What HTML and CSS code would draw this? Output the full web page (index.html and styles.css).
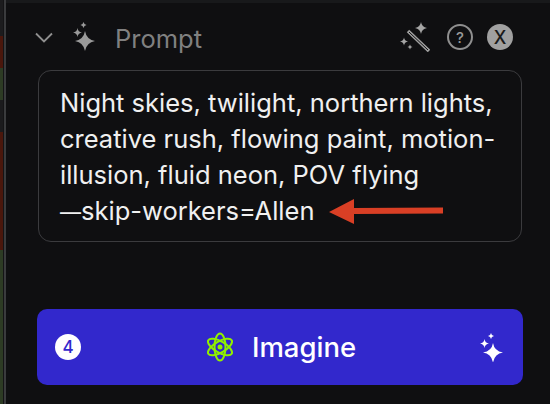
FILE: index.html
```html
<!DOCTYPE html>
<html lang="en">
<head>
    <meta charset="UTF-8">
    <meta name="viewport" content="width=device-width, initial-scale=1.0">
    <title>Prompt</title>
    <link rel="stylesheet" href="styles.css">
</head>
<body>
    <div class="page">
        <!-- bit of the timeline showing at the left edge -->
        <div class="strip">
            <div class="seg seg-dark1"></div>
            <div class="seg seg-red1"></div>
            <div class="seg seg-green1"></div>
            <div class="seg seg-dark2"></div>
            <div class="seg seg-red2"></div>
            <div class="seg seg-green2"></div>
        </div>

        <div class="panel">
            <div class="header">
                <svg class="chevron" viewBox="0 0 18 11" width="18" height="11">
                    <path d="M1 1.500 L9 9.500 L17 1.500" fill="none" stroke="#8f8f8f" stroke-width="1.800"/>
                </svg>
                <svg class="sparkle" viewBox="0 0 24 30" width="24" height="30">
                    <path d="M12 9 Q13.500 17.500 22 19 Q13.500 20.500 12 29 Q10.500 20.500 2 19 Q10.500 17.500 12 9Z" fill="#9a9a9a"/>
                    <path d="M4.500 6 Q5 10 9 10.500 Q5 11 4.500 15 Q4 11 0 10.500 Q4 10 4.500 6Z" fill="#9a9a9a"/>
                    <path d="M10.500 0 Q11 2.500 13.500 3 Q11 3.500 10.500 6 Q10 3.500 7.500 3 Q10 2.500 10.500 0Z" fill="#9a9a9a"/>
                </svg>
                <span class="title">Prompt</span>
                <div class="tools">
                    <svg class="wand" viewBox="0 0 30 30" width="30" height="30">
                        <path d="M8 9 L29 29" fill="none" stroke="#a0a0a0" stroke-width="3.500"/>
                        <path d="M9 10 L28 28" fill="none" stroke="#0f0f11" stroke-width="1"/>
                        <path d="M21 0 Q21.800 5.200 27 6 Q21.800 6.800 21 12 Q20.200 6.800 15 6 Q20.200 5.200 21 0Z" fill="#a5a5a5"/>
                        <path d="M4 15.500 Q4.500 19 8 19.500 Q4.500 20 4 23.500 Q3.500 20 0 19.500 Q3.500 19 4 15.500Z" fill="#a5a5a5"/>
                        <path d="M10 22.500 Q10.300 24.700 12.500 25 Q10.300 25.300 10 27.500 Q9.700 25.300 7.500 25 Q9.700 24.700 10 22.500Z" fill="#a5a5a5"/>
                    </svg>
                    <div class="help">?</div>
                    <div class="close">X</div>
                </div>
            </div>

            <div class="prompt-box">Night skies, twilight, northern lights, creative rush, flowing paint, motion-illusion, fluid neon, POV flying<br><span class="dash">—</span>skip-workers=Allen</div>

            <div class="imagine">
                <div class="count">4</div>
                <div class="imagine-label">
                    <svg viewBox="0 0 26 30" width="26" height="30">
                        <g fill="none" stroke="#90f000" stroke-width="2">
                            <ellipse cx="13" cy="15" rx="5.500" ry="13.500"/>
                            <ellipse cx="13" cy="15" rx="5.500" ry="13.500" transform="rotate(60 13 15)"/>
                            <ellipse cx="13" cy="15" rx="5.500" ry="13.500" transform="rotate(-60 13 15)"/>
                        </g>
                        <circle cx="13" cy="15" r="2.500" fill="#90f000"/>
                    </svg>
                    <span>Imagine</span>
                </div>
                <svg class="stars" viewBox="0 0 24 30" width="24" height="30">
                    <path d="M13 11 Q14.300 19.200 23 20.500 Q14.300 21.800 13 31 Q11.700 21.800 3 20.500 Q11.700 19.200 13 11Z" fill="#fff"/>
                    <path d="M4.500 7 Q5 11 9 11.500 Q5 12 4.500 16 Q4 12 0 11.500 Q4 11 4.500 7Z" fill="#fff"/>
                    <path d="M11 1 Q11.400 3.600 14 4 Q11.400 4.400 11 7 Q10.600 4.400 8 4 Q10.600 3.600 11 1Z" fill="#fff"/>
                </svg>
            </div>
        </div>

        <!-- red annotation arrow pasted on top of the screenshot -->
        <svg class="arrow" viewBox="0 0 114 26" width="114" height="26">
            <path d="M0 13 L25 0 L25 9 L114 8.500 L114 14.500 L25 15 L25 25Z" fill="#d93f25"/>
        </svg>
    </div>
</body>
</html>
```

FILE: styles.css
```css
* {
    box-sizing: border-box;
}

body {
    margin: 0;
    background-color: #0f0f11;
    font-family: Inter, "Liberation Sans", sans-serif;
}

.page {
    position: relative;
    display: flex;
    width: 550px;
    height: 404px;
    overflow: hidden;
}

.strip {
    width: 6px;
    height: 404px;
    flex-shrink: 0;
    display: flex;
    flex-direction: column;
    padding-right: 1px;
    background-color: #141416;
    border-right: 2px solid #3a3b3d;
}

.seg-dark1 { height: 36px; background-color: #1c1c1e; }
.seg-red1 { height: 32px; background-color: #4a170c; }
.seg-green1 { height: 32px; background-color: #2d3b24; }
.seg-dark2 { height: 32px; background-color: #1b1b1d; }
.seg-red2 { height: 118px; background-color: #4a170c; }
.seg-green2 { flex: 1; background-color: #2d3b24; }

.panel {
    flex: 1;
    display: flex;
    flex-direction: column;
    padding: 0 28px 19px 32px;
    border-top: 3px solid #18191b;
}

.header {
    display: flex;
    align-items: center;
    height: 67px;
    padding-top: 1px;
}

.chevron {
    margin-left: -3px;
}

.sparkle {
    margin-left: 20px;
}

.title {
    margin-left: 18px;
    margin-top: 2px;
    font-size: 25.500px;
    color: #808080;
}

.tools {
    margin-left: auto;
    margin-right: 9px;
    display: flex;
    align-items: center;
    gap: 14px;
}

.wand {
    margin-right: 3px;
}

.help {
    width: 26px;
    height: 26px;
    border: 2px solid #8f8f8f;
    border-radius: 50%;
    display: flex;
    justify-content: center;
    align-items: center;
    font-size: 15px;
    font-weight: 500;
    color: #9a9a9a;
}

.close {
    width: 26px;
    height: 26px;
    border-radius: 50%;
    background-color: #a0a0a0;
    display: flex;
    justify-content: center;
    align-items: center;
    font-size: 18px;
    font-weight: 500;
    color: #1a1a1a;
}

.prompt-box {
    height: 172px;
    padding: 14px 21px;
    border: 1.500px solid #3b3b3e;
    border-radius: 13px;
    font-size: 25.500px;
    line-height: 36px;
    color: #f0f0f0;
}

.dash {
    font-size: 21px;
}

.imagine {
    margin-top: auto;
    margin-left: -1px;
    margin-right: -1px;
    height: 76px;
    display: flex;
    align-items: center;
    justify-content: space-between;
    padding: 0 19px 0 18px;
    border-radius: 10px;
    background-color: #3228cc;
}

.count {
    width: 26px;
    height: 26px;
    border-radius: 50%;
    background-color: #fff;
    color: #3228cc;
    display: flex;
    justify-content: center;
    align-items: center;
    font-size: 17px;
    font-weight: 500;
}

.imagine-label {
    display: flex;
    align-items: center;
    gap: 19px;
    font-size: 27.500px;
    font-weight: 500;
    color: #fff;
    margin-left: 2px;
}

.arrow {
    position: absolute;
    left: 329px;
    top: 199px;
}
```
